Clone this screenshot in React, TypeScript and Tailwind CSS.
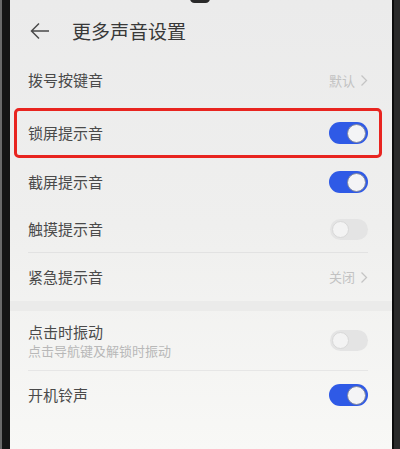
import React from "react";

const font = { fontFamily: '"Noto Sans CJK SC", "Noto Sans", sans-serif' };

function Toggle({ on }: { on: boolean }) {
  return on ? (
    <div className="flex h-[22px] w-[39px] items-center justify-end rounded-full bg-[#2f5ae6] px-[2px]">
      <div className="h-[19px] w-[19px] rounded-full border-[1.5px] border-[#7f86a0] bg-[#f4f4f6]" />
    </div>
  ) : (
    <div className="flex h-[21px] w-[38px] items-center justify-start rounded-full bg-[#e4e4e4] px-[2px]">
      <div className="h-[17px] w-[17px] rounded-full border border-[#d8d8d8] bg-[#f3f3f3]" />
    </div>
  );
}

function Chevron({ label }: { label: string }) {
  return (
    <div className="flex items-center gap-[5px] text-[13px] text-[#c2c2c2]">
      <span>{label}</span>
      <svg width="8" height="13" viewBox="0 0 8 13" fill="none">
        <path d="M1.5 1.5 L6.5 6.5 L1.5 11.5" stroke="#c4c4c4" strokeWidth="1.3" />
      </svg>
    </div>
  );
}

function Row({ title, right, className = "" }: { title: string; right: React.ReactNode; className?: string }) {
  return (
    <div className={`flex items-center justify-between pl-[18px] pr-[24px] ${className}`}>
      <span className="text-[15px] text-[#4a4a4a]">{title}</span>
      {right}
    </div>
  );
}

export default function App() {
  return (
    <div className="flex h-[449px] w-[400px] overflow-hidden bg-[#141414]" style={font}>
      <div className="w-[10px] border-l-2 border-[#6a6a6a] bg-[#151515]" />
      <div className="relative flex flex-1 flex-col bg-gradient-to-b from-[#ebebeb] via-[#efefee] to-[#f8f8f6]">
        <div className="absolute left-[180px] top-[-6px] h-[9px] w-[20px] rounded-full bg-[#2a2a2a]" />
        <div className="flex h-[56px] items-start gap-[22px] pl-[20px] pt-[18px]">
          <svg width="20" height="20" viewBox="0 0 20 20" fill="none" className="mt-[3px]">
            <path d="M19 10 H2 M9 2.5 L1.5 10 L9 17.5" stroke="#4a4a4a" strokeWidth="1.5" />
          </svg>
          <span className="text-[19px] leading-[26px] text-[#383838]">更多声音设置</span>
        </div>
        <Row title="拨号按键音" right={<Chevron label="默认" />} className="h-[49px] pr-[20px]" />
        <div className="ml-[4px] mr-[10px] mt-[3px] flex h-[50px] items-center justify-between rounded-[5px] border-[3px] border-[#e8241f] pl-[11px] pr-[11px]">
          <span className="text-[15px] text-[#4a4a4a]">锁屏提示音</span>
          <Toggle on />
        </div>
        <Row title="截屏提示音" right={<Toggle on />} className="h-[48px]" />
        <Row title="触摸提示音" right={<Toggle on={false} />} className="h-[46px]" />
        <div className="ml-[18px] mr-[24px] h-px bg-[#e2e2e2]" />
        <Row title="紧急提示音" right={<Chevron label="关闭" />} className="h-[48px] pr-[20px]" />
        <div className="h-[10px] bg-[#ebebea]" />
        <div className="flex h-[59px] items-center justify-between pl-[18px] pr-[24px]">
          <div className="flex flex-col">
            <span className="text-[15px] leading-[21px] text-[#4a4a4a]">点击时振动</span>
            <span className="text-[13px] leading-[18px] text-[#b8b8b8]">点击导航键及解锁时振动</span>
          </div>
          <Toggle on={false} />
        </div>
        <div className="ml-[18px] mr-[24px] h-px bg-[#e6e6e6]" />
        <Row title="开机铃声" right={<Toggle on />} className="h-[48px]" />
        <div className="flex-1" />
      </div>
      <div className="w-[8px] border-l-2 border-[#0c0c0c] bg-[#2a2a2a]" />
    </div>
  );
}
